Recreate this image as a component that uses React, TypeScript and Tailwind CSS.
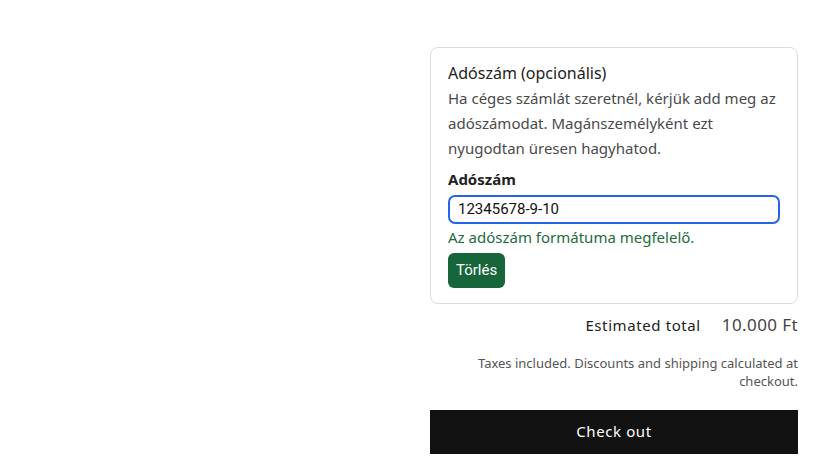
import React from "react";

export default function App() {
  return (
    <div className="w-[828px] h-[466px] bg-white overflow-hidden font-['Noto_Sans',sans-serif]">
      <div className="ml-[430px] w-[368px] pt-[47px]">
        <div className="border border-[#dcdcdc] rounded-[8px] px-[17px] pt-[15px] pb-[15px]">
          <div className="text-[16px] leading-[20px] text-[#222]">Adószám (opcionális)</div>
          <p className="mt-[3px] text-[15px] leading-[25px] text-[#4a4a4a]">
            Ha céges számlát szeretnél, kérjük add meg az adószámodat. Magánszemélyként ezt nyugodtan üresen hagyhatod.
          </p>
          <div className="mt-[8px] text-[15px] leading-[20px] font-bold text-[#222]">Adószám</div>
          <div className="mt-[6px] h-[29px] border-2 border-[#2563eb] rounded-[7px] flex items-center px-[8px] font-['Roboto',sans-serif] text-[15px] text-[#111]">
            12345678-9-10
          </div>
          <div className="mt-[2px] text-[15px] leading-[22px] text-[#1e6b3a]">Az adószám formátuma megfelelő.</div>
          <button className="mt-[5px] h-[35px] px-[8px] rounded-[6px] bg-[#17653a] text-white font-['Roboto',sans-serif] text-[15px]">
            Törlés
          </button>
        </div>
        <div className="mt-[8px] flex justify-end items-baseline gap-[21px] text-[#222]">
          <span className="text-[15px] tracking-[0.6px]">Estimated total</span>
          <span className="text-[17px] tracking-[0.4px] text-[#444]">10.000 Ft</span>
        </div>
        <p className="mt-[16px] text-right text-[13px] leading-[18px] text-[#555]">
          Taxes included. Discounts and shipping calculated at checkout.
        </p>
        <button className="mt-[20px] w-full h-[44px] bg-[#121212] text-white text-[15px] tracking-[0.6px]">
          Check out
        </button>
      </div>
    </div>
  );
}
